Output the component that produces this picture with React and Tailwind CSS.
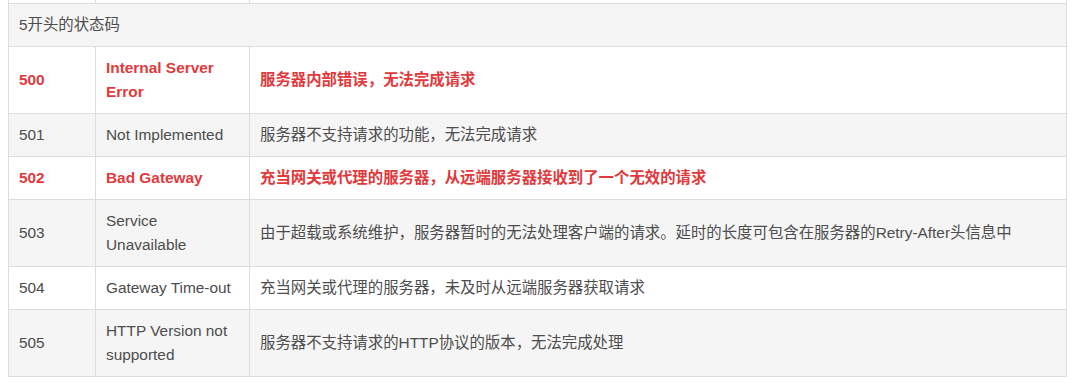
const rows = [
  { code: "500", name: "Internal Server Error", desc: "服务器内部错误，无法完成请求", hot: true },
  { code: "501", name: "Not Implemented", desc: "服务器不支持请求的功能，无法完成请求" },
  { code: "502", name: "Bad Gateway", desc: "充当网关或代理的服务器，从远端服务器接收到了一个无效的请求", hot: true },
  { code: "503", name: "Service Unavailable", desc: "由于超载或系统维护，服务器暂时的无法处理客户端的请求。延时的长度可包含在服务器的Retry-After头信息中" },
  { code: "504", name: "Gateway Time-out", desc: "充当网关或代理的服务器，未及时从远端服务器获取请求" },
  { code: "505", name: "HTTP Version not supported", desc: "服务器不支持请求的HTTP协议的版本，无法完成处理" },
];

const cell = "border border-[#dddddd] px-[10px] py-[9px] align-middle";

export default function App() {
  return (
    <div className="h-[384px] overflow-hidden bg-white px-2">
      <table
        className="w-[1059px] table-fixed border-collapse text-[15.4px] leading-[24px] text-[#4d4d4d]"
        style={{ fontFamily: '"Liberation Sans", Arial, "Noto Sans CJK SC", sans-serif' }}
      >
        <colgroup>
          <col className="w-[87px]" />
          <col className="w-[154px]" />
          <col />
        </colgroup>
        <tbody>
          <tr className="bg-white">
            <td className="h-[3px] border-x border-b border-[#dddddd] p-0" />
            <td className="h-[3px] border-x border-b border-[#dddddd] p-0" />
            <td className="h-[3px] border-x border-b border-[#dddddd] p-0" />
          </tr>
          <tr className="bg-[#f5f5f5]">
            <td colSpan={3} className={cell}>5开头的状态码</td>
          </tr>
          {rows.map((r, i) => (
            <tr
              key={r.code}
              className={i % 2 === 0 ? "bg-white" : "bg-[#f5f5f5]"}
            >
              <td className={`${cell} ${r.hot ? "font-bold text-[#e2393c]" : ""}`}>{r.code}</td>
              <td className={`${cell} ${r.hot ? "font-bold text-[#e2393c]" : ""}`}>{r.name}</td>
              <td className={`${cell} ${r.hot ? "font-bold text-[#e2393c]" : ""}`}>{r.desc}</td>
            </tr>
          ))}
        </tbody>
      </table>
    </div>
  );
}
